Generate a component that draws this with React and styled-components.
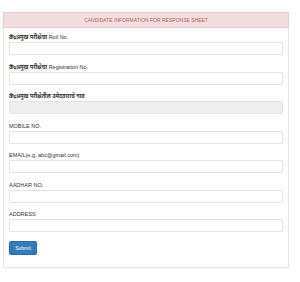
import React from "react";
import styled, { createGlobalStyle } from "styled-components";

const GlobalStyle = createGlobalStyle`
  html, body {
    margin: 0;
    padding: 0;
    background: #ffffff;
  }
  body {
    font-family: "Liberation Sans", Arial, "Noto Sans", sans-serif;
    color: #333;
  }
`;

const fields = [
  { hi: "केंद्रप्रमुख परीक्षेचा", en: "Roll No." },
  { hi: "केंद्रप्रमुख परीक्षेचा", en: "Registration No." },
  { hi: "केंद्रप्रमुख परीक्षेतील उमेदवाराचे नाव", en: "", disabled: true },
  { en: "MOBILE NO." },
  { en: "EMAIL(e.g. abc@gmail.com)" },
  { en: "AADHAR NO." },
  { en: "ADDRESS" },
];

const App = () => {
  return (
    <Page>
      <GlobalStyle />
      <Panel>
        <PanelHeading>CANDIDATE INFORMATION FOR RESPONSE SHEET</PanelHeading>
        <PanelBody>
          {fields.map((f, i) => (
            <Group key={i}>
              <Label>
                {f.hi && <Hindi>{f.hi}</Hindi>}
                {f.hi && f.en ? " " : ""}
                {f.en}
              </Label>
              <Input type="text" disabled={f.disabled} />
            </Group>
          ))}
          <SubmitButton type="button">Submit</SubmitButton>
        </PanelBody>
      </Panel>
    </Page>
  );
};

export default App;

const Page = styled.div`
  width: 300px;
  height: 282px;
  padding: 12px 0 0 3px;
  box-sizing: border-box;
`;

const Panel = styled.div`
  width: 286px;
  box-sizing: border-box;
  border: 1px solid #e6e6e6;
  border-radius: 1px;
  background: #fff;
  box-shadow: 0 1px 1px rgba(0, 0, 0, 0.04);
`;

const PanelHeading = styled.div`
  height: 16px;
  margin: -1px -1px 0;
  background: #f2dede;
  border: 1px solid #ebccd1;
  box-sizing: border-box;
  color: #c05a5a;
  font-size: 5px;
  display: flex;
  align-items: center;
  justify-content: center;
`;

const PanelBody = styled.div`
  padding: 6px 5px 12px;
`;

const Group = styled.div`
  margin-bottom: 8.5px;
`;

const Label = styled.div`
  font-size: 5.5px;
  line-height: 6px;
  margin-bottom: 2px;
  color: #333;
  white-space: nowrap;
`;

const Hindi = styled.span`
  font-weight: 700;
  font-family: "Noto Sans", "Liberation Sans", sans-serif;
`;

const Input = styled.input`
  display: block;
  width: 100%;
  height: 13px;
  box-sizing: border-box;
  border: 1px solid #e4e4e4;
  border-radius: 1px;
  background: #fff;
  padding: 0;
  margin: 0;

  &:disabled {
    background: #eeeeee;
    border-color: #e4e4e4;
  }
`;

const SubmitButton = styled.button`
  margin-top: 4.5px;
  width: 28px;
  height: 14px;
  padding: 0;
  border: 1px solid #2e6da4;
  border-radius: 2px;
  background: #337ab7;
  color: #fff;
  font-family: "Liberation Sans", Arial, sans-serif;
  font-size: 5px;
  display: flex;
  align-items: center;
  justify-content: center;
`;
